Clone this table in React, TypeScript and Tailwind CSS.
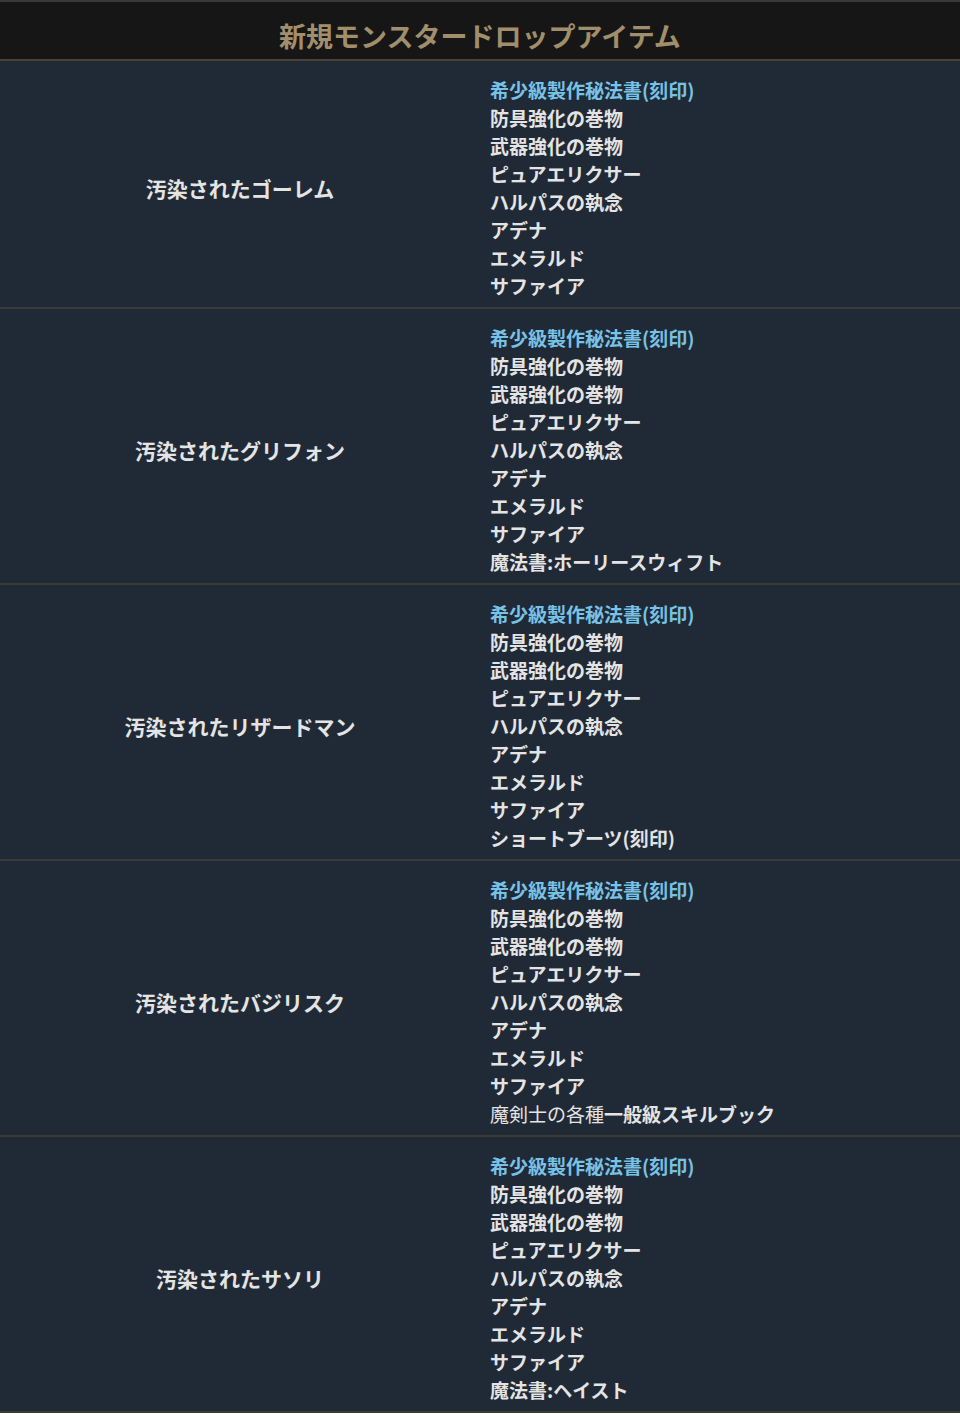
const common = ['防具強化の巻物', '武器強化の巻物', 'ピュアエリクサー', 'ハルパスの執念', 'アデナ', 'エメラルド', 'サファイア'];

type Item = { text: string; light?: string };

const monsters: { name: string; extra?: Item }[] = [
  { name: '汚染されたゴーレム' },
  { name: '汚染されたグリフォン', extra: { text: '魔法書:ホーリースウィフト' } },
  { name: '汚染されたリザードマン', extra: { text: 'ショートブーツ(刻印)' } },
  { name: '汚染されたバジリスク', extra: { light: '魔剣士の各種', text: '一般級スキルブック' } },
  { name: '汚染されたサソリ', extra: { text: '魔法書:ヘイスト' } },
];

function MonsterRow({ name, extra }: { name: string; extra?: Item }) {
  return (
    <div className="flex border-b-2 border-[#3d3933] bg-[#202a36]">
      <div className="flex w-[480px] items-center justify-center pt-[10px] text-[21px] font-bold text-[#e4e4e4]">
        {name}
      </div>
      <div className="flex-1 pt-[15px] pb-[7px] pl-[10px] text-[19px] font-bold leading-[28px] text-[#e4e4e4]">
        <div className="text-[#78c2e6]">希少級製作秘法書(刻印)</div>
        {common.map((c) => (
          <div key={c}>{c}</div>
        ))}
        {extra && (
          <div>
            {extra.light && <span className="font-normal">{extra.light}</span>}
            {extra.text}
          </div>
        )}
      </div>
    </div>
  );
}

export default function App() {
  return (
    <div
      className="w-[960px] bg-[#202a36]"
      style={{ fontFamily: '"Noto Sans CJK JP", "Noto Sans", sans-serif' }}
    >
      <div className="flex h-[61px] items-center justify-center border-t-2 border-b-2 border-t-[#3b3a39] border-b-[#4d4231] bg-[#171616] pt-[12px]">
        <h1 className="text-[27px] font-bold text-[#a18f6c]">新規モンスタードロップアイテム</h1>
      </div>
      {monsters.map((m) => (
        <MonsterRow key={m.name} name={m.name} extra={m.extra} />
      ))}
    </div>
  );
}
